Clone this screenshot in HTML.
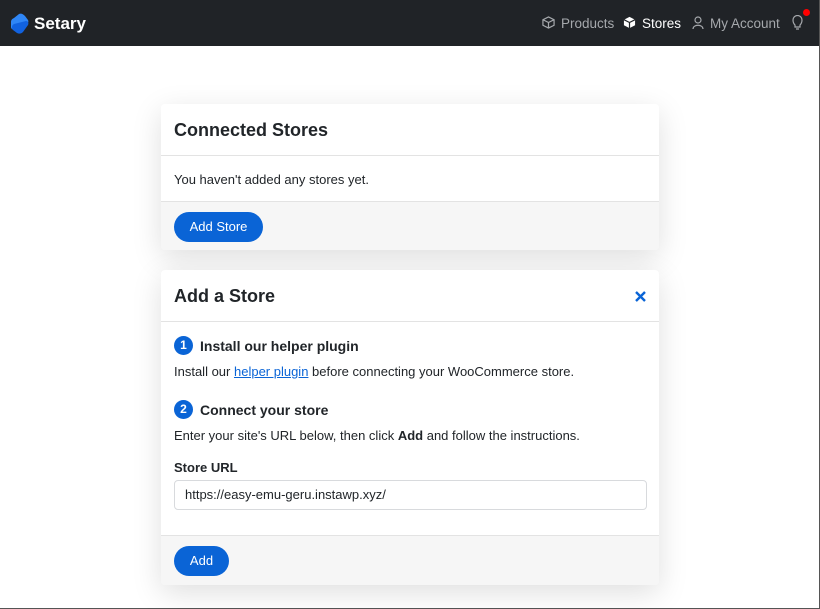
<!DOCTYPE html>
<html><head><style>
*{box-sizing:border-box;margin:0;padding:0}
body{width:820px;height:609px;background:#fff;font-family:"Liberation Sans",sans-serif;color:#212529;position:relative;overflow:hidden;border-right:1px solid #555;border-bottom:1px solid #555}
.nav{height:46px;background:#202327;position:relative}
.logo{position:absolute;left:10px;top:13px}
.brand{position:absolute;left:34px;top:14px;color:#fff;font-weight:bold;font-size:17px}
.nl{position:absolute;top:16px;font-size:13.5px;color:#a5a8ac}
.card{position:absolute;left:161px;width:498px;background:#fff;border-radius:4px;box-shadow:0 8px 30px rgba(0,0,0,.13)}
.hd{height:52px;border-bottom:1px solid #e3e3e3;padding:0 13px;font-weight:bold;font-size:18px;line-height:52px;position:relative}
.ft{background:#f6f6f6;border-top:1px solid #e3e3e3;border-radius:0 0 4px 4px;position:relative}
.btn{position:absolute;left:13px;background:#0a64d6;color:#fff;font-size:13px;border-radius:16px;height:30px;line-height:30px;text-align:center}
.t{position:absolute;left:13px;font-size:13px}
.step{position:absolute;left:13px;font-weight:bold;font-size:14px;display:flex;align-items:center}
.num{width:19px;height:19px;border-radius:50%;background:#0a64d6;color:#fff;font-size:12px;text-align:center;line-height:19px;margin-right:7px}
</style></head><body>
<div class="nav">
<svg class="logo" width="20" height="22" viewBox="0 0 20 22"><path d="M9 1 C11 0 13 1 15 3 L18 7 C19 9 18 10 16 11 L5 16 C3 17 1 16 1 14 L1 9 C1 7 2 6 4 5 Z" fill="#2f86f6"/><path d="M4 11 L16 8 C18 8 19 10 18 12 L13 19 C11 21 9 21 7 20 L3 17 C1 15 2 12 4 11 Z" fill="#1162e0"/></svg>
<div class="brand">Setary</div>
<svg style="position:absolute;left:542px;top:16px" width="13" height="13" viewBox="0 0 14 14" fill="none" stroke="#a5a8ac" stroke-width="1.3"><path d="M7 1 L13 4 V10 L7 13 L1 10 V4 Z M1 4 L7 7 L13 4 M7 7 V13"/></svg>
<div class="nl" style="left:561px">Products</div>
<svg style="position:absolute;left:623px;top:16px" width="13" height="13" viewBox="0 0 14 14"><path d="M7 1 L13 4 V10 L7 13 L1 10 V4 Z" fill="#fff"/><path d="M1 4 L7 7 L13 4 M7 7 V13" stroke="#202327" stroke-width="1.3" fill="none"/></svg>
<div class="nl" style="left:642px;color:#fff">Stores</div>
<svg style="position:absolute;left:692px;top:16px" width="12" height="13" viewBox="0 0 12 13" fill="none" stroke="#a5a8ac" stroke-width="1.2"><circle cx="6" cy="4" r="3"/><path d="M1 13 C1 8 11 8 11 13"/></svg>
<div class="nl" style="left:710px">My Account</div>
<svg style="position:absolute;left:792px;top:15px" width="11" height="16" viewBox="0 0 11 16" fill="none" stroke="#a5a8ac" stroke-width="1.2"><path d="M3 10 C1 8 1 6 1 5 A4.5 4.5 0 0 1 10 5 C10 6 10 8 8 10 V12 H3 Z M4 14 H7"/></svg>
<div style="position:absolute;left:803px;top:9px;width:7px;height:7px;border-radius:50%;background:#f00"></div>
</div>

<div class="card" style="top:104px;height:146px">
<div class="hd">Connected Stores</div>
<div class="t" style="top:68px">You haven't added any stores yet.</div>
<div class="ft" style="position:absolute;top:97px;left:0;right:0;height:49px">
<div class="btn" style="top:10px;width:89px">Add Store</div></div>
</div>

<div class="card" style="top:270px;height:315px">
<div class="hd">Add a Store<svg style="position:absolute;right:13px;top:21px" width="11" height="11" viewBox="0 0 11 11"><path d="M1 1 L10 10 M10 1 L1 10" stroke="#0a64d6" stroke-width="2.4"/></svg></div>
<div class="step" style="top:66px"><span class="num">1</span>Install our helper plugin</div>
<div class="t" style="top:94px">Install our <span style="color:#0a64d6;text-decoration:underline">helper plugin</span> before connecting your WooCommerce store.</div>
<div class="step" style="top:130px"><span class="num">2</span>Connect your store</div>
<div class="t" style="top:158px">Enter your site's URL below, then click <b>Add</b> and follow the instructions.</div>
<div class="t" style="top:190px;font-weight:bold">Store URL</div>
<div style="position:absolute;left:13px;top:210px;width:473px;height:30px;border:1px solid #d8dadd;border-radius:4px;font-size:13px;line-height:28px;padding-left:10px">https://easy-emu-geru.instawp.xyz/</div>
<div class="ft" style="position:absolute;top:265px;left:0;right:0;height:50px">
<div class="btn" style="top:10px;width:55px">Add</div></div>
</div>
</body></html>
